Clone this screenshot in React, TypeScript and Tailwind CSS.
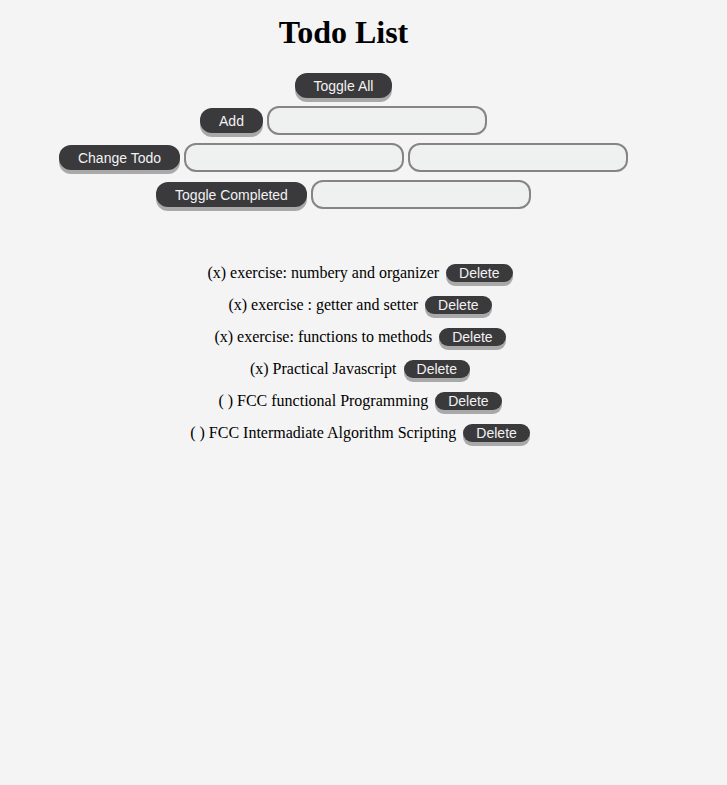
const todos = [
  { text: "exercise: numbery and organizer", done: true },
  { text: "exercise : getter and setter", done: true },
  { text: "exercise: functions to methods", done: true },
  { text: "Practical Javascript", done: true },
  { text: "FCC functional Programming", done: false },
  { text: "FCC Intermadiate Algorithm Scripting", done: false },
];

function Btn({ label, small = false }: { label: string; small?: boolean }) {
  return (
    <button
      className={`bg-[#3a393c] text-[#f2f2f2] font-['Liberation_Sans',Arial,sans-serif] text-[14px] leading-[16px] rounded-[12px] shadow-[0_4px_0_#a9a9a9] ${
        small ? "px-[13px] py-[1px]" : "px-[19px] py-[5px] h-[25px]"
      }`}
    >
      {label}
    </button>
  );
}

function Field() {
  return (
    <input
      type="text"
      className="w-[220px] h-[29px] bg-[#eff0f0] border-2 border-[#858585] rounded-[12px] outline-none"
    />
  );
}

export default function App() {
  return (
    <div className="min-h-[785px] bg-[#f4f4f4] font-['Liberation_Serif','Times_New_Roman',serif] text-black">
      <div className="w-[687px] flex flex-col items-center">
        <h1 className="mt-[14px] text-[32px] leading-[37px] font-bold">Todo List</h1>
        <div className="mt-[22px] flex flex-col items-center gap-[8px]">
          <div className="h-[25px] flex items-start">
            <Btn label="Toggle All" />
          </div>
          <div className="flex items-center gap-[4px]">
            <Btn label="Add" />
            <Field />
          </div>
          <div className="flex items-center gap-[4px]">
            <Btn label="Change Todo" />
            <Field />
            <Field />
          </div>
          <div className="flex items-center gap-[4px]">
            <Btn label="Toggle Completed" />
            <Field />
          </div>
        </div>
      </div>
      <ul className="w-[720px] mt-[48px] flex flex-col">
        {todos.map((t, i) => (
          <li key={i} className="h-[32px] flex items-center justify-center gap-[7px] text-[16px]">
            <span>
              {t.done ? "(x)" : "( )"} {t.text}
            </span>
            <Btn label="Delete" small />
          </li>
        ))}
      </ul>
    </div>
  );
}
